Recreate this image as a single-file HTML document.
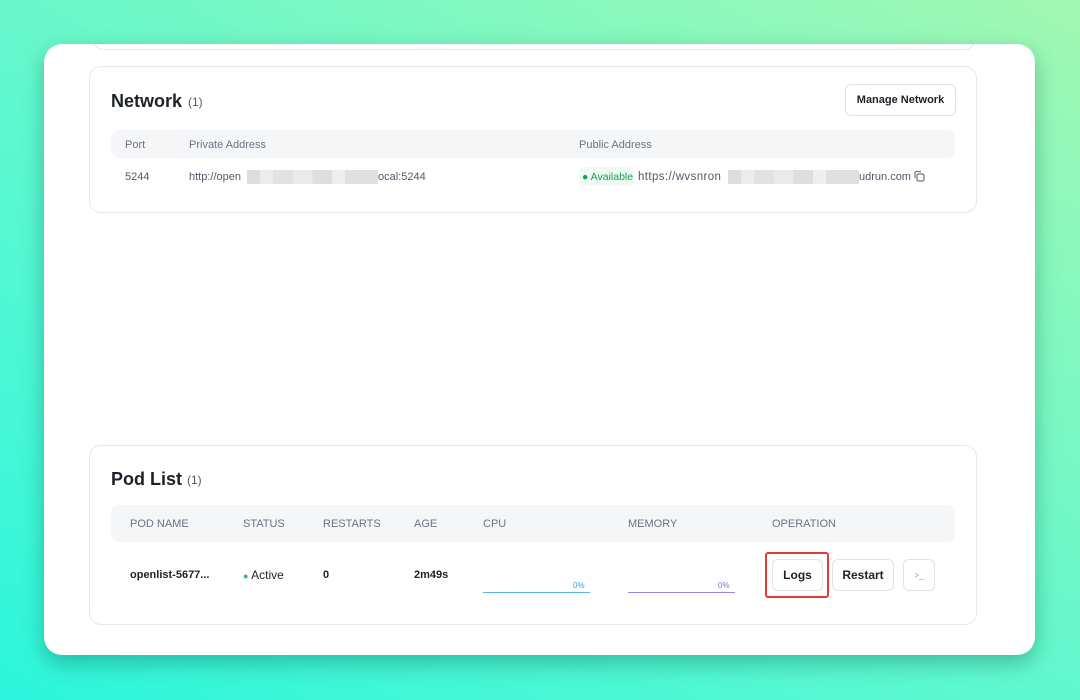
<!DOCTYPE html>
<html><head><meta charset="utf-8"><style>
*{box-sizing:border-box;margin:0;padding:0}
body{width:1080px;height:700px;overflow:hidden;font-family:"Liberation Sans",sans-serif;background:linear-gradient(30deg,#2cf6dc 0%,#5ff8cf 45%,#a2f8b2 100%);position:relative}
.win{position:absolute;left:44px;top:44px;width:991px;height:611px;background:#fff;border-radius:18px;box-shadow:0 8px 22px rgba(0,80,60,.35);overflow:hidden}
.card{position:absolute;border:1px solid #e6e7eb;border-radius:12px;background:#fff}
.abs{position:absolute;white-space:nowrap}
.h{font-size:18px;color:#1d2129;font-weight:600}
.cnt{font-size:12px;color:#4e5969}
.thead{position:absolute;background:#f5f6f8;border-radius:8px}
.th{font-size:11px;color:#6b7280}
.td{font-size:11px;color:#1d2129}
.btn{position:absolute;border:1px solid #e2e3e8;border-radius:6px;background:#fff;font-size:12px;color:#1d2129;display:flex;align-items:center;justify-content:center;font-weight:600}
.blur{position:absolute;height:14px;background:linear-gradient(90deg,#ddd 0 10%,#ececec 10% 20%,#e2e2e2 20% 35%,#eaeaea 35% 50%,#dedede 50% 65%,#eee 65% 75%,#e0e0e0 75% 100%)}
</style></head><body>
<div class="win">
  <div class="card" style="left:48px;top:-20px;width:884px;height:26px"></div>
  <div class="card" style="left:45px;top:22px;width:888px;height:147px">
    <div class="abs h" style="left:21px;top:24px">Network</div>
    <div class="abs cnt" style="left:98px;top:28px">(1)</div>
    <div class="btn" style="left:755px;top:17px;width:111px;height:32px;font-size:11px">Manage Network</div>
    <div class="thead" style="left:21px;top:63px;width:844px;height:28px"></div>
    <div class="abs th" style="left:35px;top:72px">Port</div>
    <div class="abs th" style="left:99px;top:72px">Private Address</div>
    <div class="abs th" style="left:489px;top:72px">Public Address</div>
    <div class="abs td" style="left:35px;top:104px;color:#4e5969">5244</div>
    <div class="abs td" style="left:99px;top:104px;color:#4e5969">http://open</div>
    <div class="blur" style="left:157px;top:103px;width:131px"></div>
    <div class="abs td" style="left:288px;top:104px;color:#4e5969">ocal:5244</div>
    <div class="abs" style="left:489px;top:100px;height:19px;width:56px;background:#eefaf3;border-radius:6px"></div>
    <div class="abs td" style="left:492px;top:104px;color:#16a34a;font-size:10.5px">● Available</div>
    <div class="abs td" style="left:548px;top:104px;color:#4e5969;font-size:11.5px;letter-spacing:0.4px">https://wvsnron</div>
    <div class="blur" style="left:638px;top:103px;width:131px"></div>
    <div class="abs td" style="left:769px;top:104px;color:#4e5969;font-size:11px">udrun.com</div>
    <svg class="abs" style="left:823px;top:103px" width="13" height="13" viewBox="0 0 13 13" fill="none" stroke="#6b7280" stroke-width="1.2"><rect x="4" y="4" width="7" height="7" rx="1.5"/><path d="M2 8V3a1.5 1.5 0 0 1 1.5-1.5H8"/></svg>
  </div>
  <div class="card" style="left:45px;top:401px;width:888px;height:180px">
    <div class="abs h" style="left:21px;top:23px">Pod List</div>
    <div class="abs cnt" style="left:97px;top:27px">(1)</div>
    <div class="thead" style="left:21px;top:59px;width:844px;height:37px"></div>
    <div class="abs th" style="left:40px;top:72px">POD NAME</div>
    <div class="abs th" style="left:153px;top:72px">STATUS</div>
    <div class="abs th" style="left:233px;top:72px">RESTARTS</div>
    <div class="abs th" style="left:324px;top:72px">AGE</div>
    <div class="abs th" style="left:393px;top:72px">CPU</div>
    <div class="abs th" style="left:538px;top:72px">MEMORY</div>
    <div class="abs th" style="left:682px;top:72px">OPERATION</div>
    <div class="abs td" style="left:40px;top:123px;font-weight:600">openlist-5677...</div>
    <div class="abs td" style="left:153px;top:122px;font-size:12px"><span style="color:#22c55e;font-size:9px">●</span> Active</div>
    <div class="abs td" style="left:233px;top:123px;font-weight:600">0</div>
    <div class="abs td" style="left:324px;top:123px;font-weight:600">2m49s</div>
    <div class="abs" style="left:483px;top:135px;font-size:8px;color:#3b9ed8">0%</div>
    <div class="abs" style="left:393px;top:146px;width:107px;height:1px;background:#5ab4e6"></div>
    <div class="abs" style="left:628px;top:135px;font-size:8px;color:#8b6ee0">0%</div>
    <div class="abs" style="left:538px;top:146px;width:107px;height:1px;background:#9b82e6"></div>
    <div class="abs" style="left:675px;top:106px;width:64px;height:46px;border:2px solid #e03b3b;border-radius:3px"></div>
    <div class="btn" style="left:682px;top:113px;width:51px;height:32px">Logs</div>
    <div class="btn" style="left:742px;top:113px;width:62px;height:32px">Restart</div>
    <div class="btn" style="left:813px;top:113px;width:32px;height:32px;font-size:8px;color:#999;font-weight:400">&gt;_</div>
  </div>
</div>
</body></html>
